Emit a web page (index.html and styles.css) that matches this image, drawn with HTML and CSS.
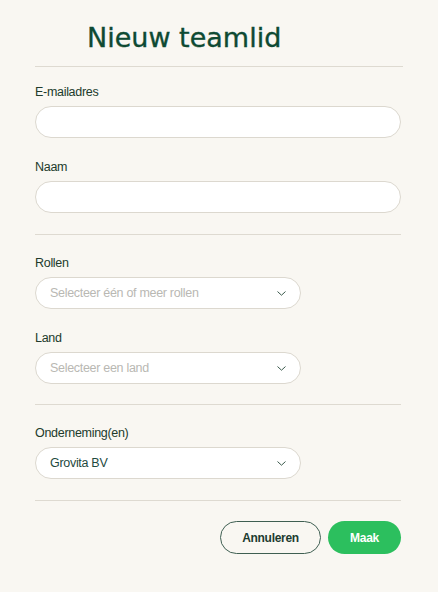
FILE: index.html
```html
<!DOCTYPE html>
<html lang="nl">
<head>
<meta charset="utf-8">
<title>Nieuw teamlid</title>
<link rel="stylesheet" href="styles.css">
</head>
<body>
<div class="page">
  <h1 class="title">Nieuw teamlid</h1>
  <div class="rule rule-top"></div>

  <section class="section s1">
    <div class="field">
      <label class="label">E-mailadres</label>
      <div class="input"></div>
    </div>
    <div class="field">
      <label class="label">Naam</label>
      <div class="input"></div>
    </div>
  </section>
  <div class="rule"></div>

  <section class="section s2">
    <div class="field">
      <label class="label">Rollen</label>
      <div class="select">
        <span class="placeholder">Selecteer één of meer rollen</span>
        <svg class="chev" width="9" height="5" viewBox="0 0 9 5"><path d="M0.8 0.8 L4.5 4.2 L8.2 0.8" fill="none" stroke="#3b5a4c" stroke-width="1" stroke-linecap="round" stroke-linejoin="round"/></svg>
      </div>
    </div>
    <div class="field">
      <label class="label">Land</label>
      <div class="select">
        <span class="placeholder">Selecteer een land</span>
        <svg class="chev" width="9" height="5" viewBox="0 0 9 5"><path d="M0.8 0.8 L4.5 4.2 L8.2 0.8" fill="none" stroke="#3b5a4c" stroke-width="1" stroke-linecap="round" stroke-linejoin="round"/></svg>
      </div>
    </div>
  </section>
  <div class="rule"></div>

  <section class="section s3">
    <div class="field">
      <label class="label">Onderneming(en)</label>
      <div class="select">
        <span class="value">Grovita BV</span>
        <svg class="chev" width="9" height="5" viewBox="0 0 9 5"><path d="M0.8 0.8 L4.5 4.2 L8.2 0.8" fill="none" stroke="#3b5a4c" stroke-width="1" stroke-linecap="round" stroke-linejoin="round"/></svg>
      </div>
    </div>
  </section>
  <div class="rule"></div>

  <div class="actions">
    <button class="btn btn-outline">Annuleren</button>
    <button class="btn btn-primary">Maak</button>
  </div>
</div>
</body>
</html>
```

FILE: styles.css
```css
* { box-sizing: border-box; }
html, body {
  margin: 0;
  padding: 0;
  background: #f9f7f2;
}
body {
  font-family: "Liberation Sans", Arial, sans-serif;
  font-size: 12.5px;
  letter-spacing: -0.3px;
  color: #213b2c;
}
.page {
  width: 366px;
  margin-left: 35px;
}
.title {
  margin: 0;
  padding: 22px 0 0 52px;
  font-family: "DejaVu Sans", sans-serif;
  font-weight: normal;
  font-size: 27px;
  line-height: 32px;
  letter-spacing: 0;
  color: #0e4a33;
  -webkit-text-stroke: 0.35px #0e4a33;
}
.rule {
  height: 1px;
  background: #dedad1;
}
.rule-top {
  margin-top: 12px;
  width: 368px;
}
.section {
  display: flex;
  flex-direction: column;
  gap: 22px;
}
.s1 { padding: 18px 0 21px; }
.s2 { padding: 21px 0 20px; }
.s3 { padding: 21px 0 21px; }
.field {
  display: flex;
  flex-direction: column;
}
.label {
  display: block;
  line-height: 14px;
  margin-bottom: 7px;
  color: #213b2c;
}
.input {
  height: 32px;
  background: #fff;
  border: 1px solid #dcd8cf;
  border-radius: 16px;
}
.select {
  width: 266px;
  height: 32px;
  background: #fff;
  border: 1px solid #dcd8cf;
  border-radius: 16px;
  display: flex;
  align-items: center;
  justify-content: space-between;
  padding: 0 14px 0 14px;
}
.placeholder {
  color: #b9b8b3;
}
.value {
  color: #1f4a3f;
}
.chev {
  display: block;
  margin-top: 1px;
}
.actions {
  display: flex;
  justify-content: flex-end;
  gap: 7px;
  padding-top: 20px;
}
.btn {
  height: 33px;
  border-radius: 17px;
  font-family: "Liberation Sans", Arial, sans-serif;
  font-weight: bold;
  font-size: 12px;
  letter-spacing: -0.3px;
  padding: 0;
  cursor: pointer;
}
.btn-outline {
  width: 101px;
  background: transparent;
  border: 1px solid #3f5f52;
  color: #1d3b30;
}
.btn-primary {
  width: 73px;
  background: #2cbf5e;
  border: none;
  color: #fff;
}
```
